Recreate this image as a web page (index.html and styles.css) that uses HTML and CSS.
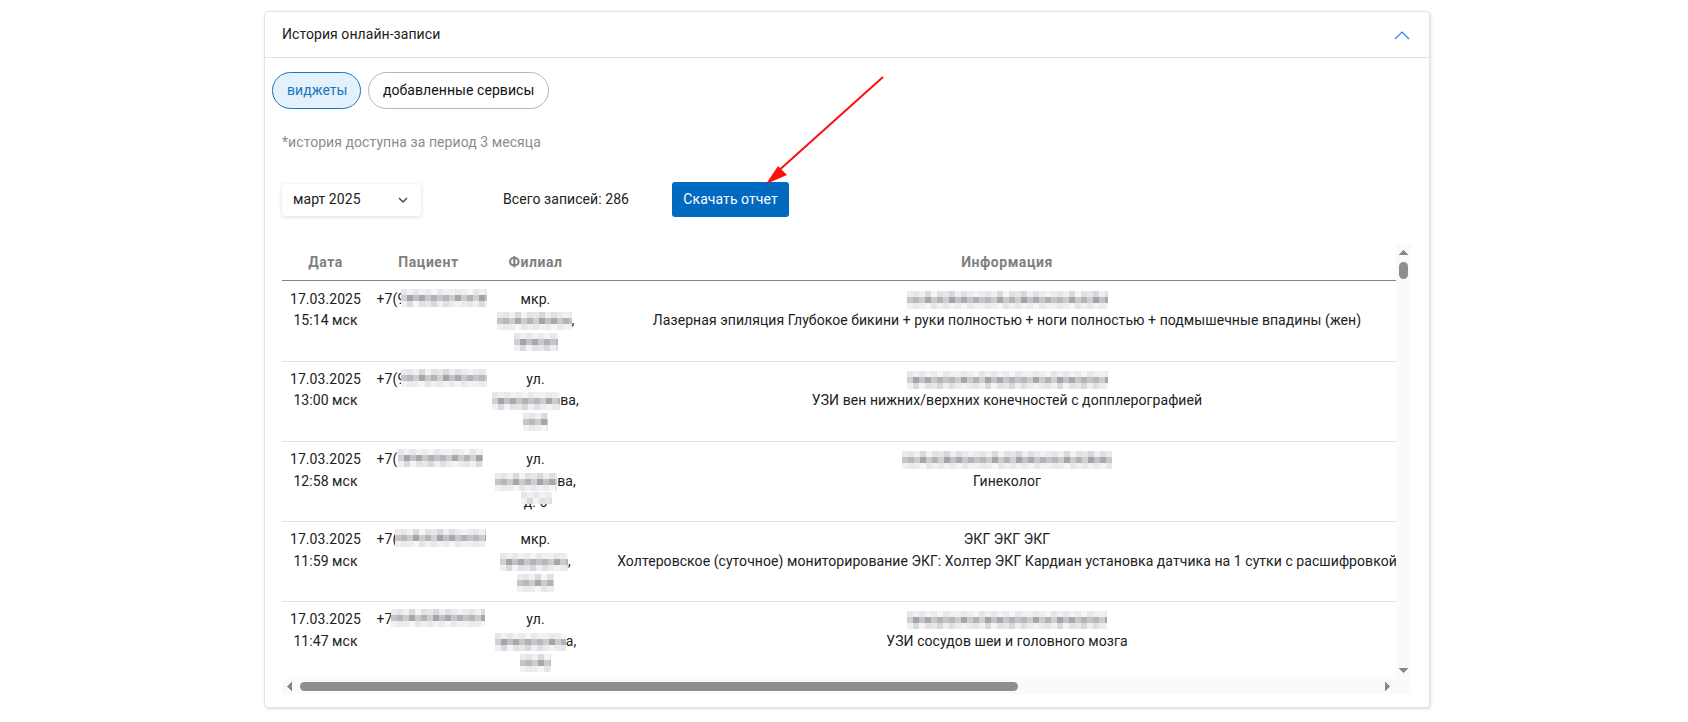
FILE: index.html
```html
<!DOCTYPE html>
<html lang="ru">
<head>
<meta charset="utf-8">
<title>История онлайн-записи</title>
<link rel="stylesheet" href="styles.css">
</head>
<body>
<section class="card">
  <header class="card-head">
    <span>История онлайн-записи</span>
    <svg class="collapse" width="16" height="10" viewBox="0 0 16 10"><path d="M1 9 L8 2 L15 9" fill="none" stroke="#2f7fef" stroke-width="1.2"/></svg>
  </header>
  <div class="pills">
    <button class="pill pill-on">виджеты</button>
    <button class="pill">добавленные сервисы</button>
  </div>
  <p class="note">*история доступна за период 3 месяца</p>
  <div class="toolbar">
    <div class="select"><span>март 2025</span>
      <svg width="10" height="6" viewBox="0 0 10 6"><path d="M1 1 L5 5 L9 1" fill="none" stroke="#444" stroke-width="1.4"/></svg>
    </div>
    <span class="total">Всего записей: 286</span>
    <button class="download">Скачать отчет</button>
  </div>
  <div class="grid-wrap">
    <div class="viewport">
      <table>
        <colgroup><col class="c-date"><col class="c-pat"><col class="c-fil"><col class="c-info"><col class="c-rest"></colgroup>
        <thead><tr><th>Дата</th><th>Пациент</th><th>Филиал</th><th>Информация</th><th></th></tr></thead>
        <tbody>
          <tr class="first">
            <td><div class="ln">17.03.2025</div><div class="ln">15:14 мск</div></td>
            <td class="phone">+7(9<i class="m m-alt ph1"></i></td>
            <td><div class="ln">мкр.</div><div class="ln"><i class="m f75"></i>,</div><div class="ln"><i class="m m-alt f44"></i></div></td>
            <td><div class="ln"><i class="m n201"></i></div><div class="ln">Лазерная эпиляция Глубокое бикини + руки полностью + ноги полностью + подмышечные впадины (жен)</div></td><td></td>
          </tr>
          <tr>
            <td><div class="ln">17.03.2025</div><div class="ln">13:00 мск</div></td>
            <td class="phone">+7(9<i class="m ph1"></i></td>
            <td><div class="ln">ул.</div><div class="ln"><i class="m m-alt f68"></i>ва,</div><div class="ln"><i class="m f25"></i></div></td>
            <td><div class="ln"><i class="m m-alt n201"></i></div><div class="ln">УЗИ вен нижних/верхних конечностей с допплерографией</div></td><td></td>
          </tr>
          <tr class="tall">
            <td><div class="ln">17.03.2025</div><div class="ln">12:58 мск</div></td>
            <td class="phone">+7(<i class="m m-alt ph2"></i></td>
            <td><div class="ln">ул.</div><div class="ln"><i class="m f62"></i>ва,</div><div class="ln"><span class="peek">д. 6<i class="m m-alt f31"></i></span></div></td>
            <td><div class="ln"><i class="m n210"></i></div><div class="ln">Гинеколог</div></td><td></td>
          </tr>
          <tr class="tall">
            <td><div class="ln">17.03.2025</div><div class="ln">11:59 мск</div></td>
            <td class="phone">+7(<i class="m ph3"></i></td>
            <td><div class="ln">мкр.</div><div class="ln"><i class="m m-alt f68"></i>,</div><div class="ln"><i class="m f37"></i></div></td>
            <td><div class="ln">ЭКГ ЭКГ ЭКГ</div><div class="ln">Холтеровское (суточное) мониторирование ЭКГ: Холтер ЭКГ Кардиан установка датчика на 1 сутки с расшифровкой</div></td><td></td>
          </tr>
          <tr class="tall">
            <td><div class="ln">17.03.2025</div><div class="ln">11:47 мск</div></td>
            <td class="phone">+7<i class="m ph4"></i></td>
            <td><div class="ln">ул.</div><div class="ln"><i class="m m-alt f71"></i>а,</div><div class="ln"><i class="m f31"></i></div></td>
            <td><div class="ln"><i class="m m-alt n200"></i></div><div class="ln">УЗИ сосудов шеи и головного мозга</div></td><td></td>
          </tr>
        </tbody>
      </table>
    </div>
    <div class="vbar">
      <i class="tri tri-up"></i>
      <i class="vthumb"></i>
      <i class="tri tri-down"></i>
    </div>
    <div class="hbar">
      <i class="tri tri-left"></i>
      <i class="hthumb"></i>
      <i class="tri tri-right"></i>
    </div>
    <div class="corner"></div>
  </div>
  <svg class="arrow" width="130" height="116" viewBox="0 0 130 116">
    <path d="M123 5 L16 101" stroke="#fb0f0f" stroke-width="2" fill="none"/>
    <path d="M6 112 L18 94 L27 103 Z" fill="#fb0f0f"/>
  </svg>
</section>
</body>
</html>
```

FILE: styles.css
```css
:root {
  --r1: linear-gradient(90deg, #eceaea 0 6px, #e4e6ea 6px 12px, #f1eff0 12px 18px, #d9dade 18px 24px, #f4f4f6 24px 30px, #e2e2e6 30px 36px, #e9e6e6 36px 42px, #d6d8dc 42px 48px, #efeff2 48px 54px, #e0e0e4 54px 60px, #ebebee 60px 66px, #f2f2f4 66px 72px);
  --r2: linear-gradient(90deg, #c6c4c6 0 6px, #b6b8bf 6px 12px, #cfcccc 12px 18px, #a9a6a8 18px 24px, #c8cbd2 24px 30px, #b8b2b0 30px 36px, #d0d0d4 36px 42px, #a2a4aa 42px 48px, #bfc2c8 48px 54px, #aaa8aa 54px 60px, #c6c8cc 60px 66px, #b0b2b8 66px 72px);
  --r3: linear-gradient(90deg, #f2f0f0 0 6px, #e8eaee 6px 12px, #eeeeee 12px 18px, #f6f6f6 18px 24px, #e6e6e8 24px 30px, #f0f0f2 30px 36px, #e6e8ec 36px 42px, #f3f1f1 42px 48px, #ebebeb 48px 54px, #f5f5f7 54px 60px, #e9e9ec 60px 66px, #f1f1f1 66px 72px);
}

* { box-sizing: border-box; }

html, body { height: 100%; }

body {
  margin: 0;
  padding: 11px 0 0 264px;
  background: #fff;
  color: #212121;
  font: 14px/21px Roboto, "Liberation Sans", Arial, sans-serif;
  letter-spacing: .065px;
  overflow: hidden;
}

.card {
  position: relative;
  width: 1166px;
  height: 697px;
  border: 1px solid #e4e4e4;
  border-radius: 4px;
  box-shadow: 1px 1px 3px rgba(0, 0, 0, .14);
}

.card-head {
  display: flex;
  align-items: center;
  justify-content: space-between;
  height: 46px;
  padding: 0 19px 0 17px;
  border-bottom: 1px solid #e2e2e2;
}

.pills {
  display: flex;
  gap: 7px;
  padding: 14px 0 0 7px;
}

.pill {
  height: 37px;
  padding: 0 14px;
  border: 1px solid #b5b5b5;
  border-radius: 19px;
  background: #fff;
  color: #111;
  font: inherit;
  letter-spacing: inherit;
}

.pill-on {
  width: 89px;
  border-color: #1a76c0;
  background: #e3f1fb;
  color: #1a76c0;
}

.note {
  margin: 23px 0 0 17px;
  color: #8c8c8c;
}

.toolbar {
  display: flex;
  align-items: center;
  height: 35px;
  margin: 29px 0 0 17px;
}

.select {
  display: flex;
  align-items: center;
  justify-content: space-between;
  width: 139px;
  height: 32px;
  padding: 0 13px 0 11px;
  border-radius: 4px;
  box-shadow: 0 1px 4px rgba(0, 0, 0, .14);
}

.total { margin-left: 82px; }

.download {
  width: 117px;
  height: 35px;
  margin-left: 43px;
  padding: 0;
  border: 0;
  border-radius: 3px;
  background: #0069c0;
  color: #fff;
  font: inherit;
  letter-spacing: inherit;
}

.grid-wrap {
  display: grid;
  grid-template: 435px 15px / 1114px 15px;
  width: 1129px;
  margin: 27px 0 0 17px;
}

.viewport { overflow: hidden; }

.vbar,
.hbar,
.corner { background: #fafafa; }

.vbar {
  display: flex;
  flex-direction: column;
  align-items: center;
  padding: 6px 0;
}

.hbar {
  display: flex;
  align-items: center;
  padding: 0 6px 0 5px;
}

.vthumb {
  width: 9px;
  height: 17px;
  margin-top: 7px;
  border-radius: 5px;
  background: #8e8e8e;
}

.hthumb {
  width: 718px;
  height: 9px;
  margin-left: 8px;
  border-radius: 5px;
  background: #8e8e8e;
}

.tri { display: block; flex: none; }

.tri-up {
  width: 9px;
  height: 5px;
  background: conic-gradient(from 138deg at 50% 0, #888 0 84deg, transparent 0);
}

.tri-down {
  width: 9px;
  height: 5px;
  margin-top: auto;
  background: conic-gradient(from -42deg at 50% 100%, #888 0 84deg, transparent 0);
}

.tri-left {
  width: 5px;
  height: 9px;
  background: conic-gradient(from 48deg at 0 50%, #888 0 84deg, transparent 0);
}

.tri-right {
  width: 5px;
  height: 9px;
  margin-left: auto;
  background: conic-gradient(from 228deg at 100% 50%, #888 0 84deg, transparent 0);
}

table {
  width: 1671px;
  table-layout: fixed;
  border-collapse: separate;
  border-spacing: 0;
}

.c-date { width: 87px; }
.c-pat { width: 119px; }
.c-fil { width: 95px; }
.c-info { width: 848px; }
.c-rest { width: 522px; }

th {
  height: 37px;
  padding: 0;
  border-bottom: 1px solid #848484;
  color: #808080;
  font-weight: 700;
  letter-spacing: .55px;
}

td {
  height: 80px;
  padding: 7px 0 0;
  border-bottom: 1px solid #e2e2e8;
  text-align: center;
  vertical-align: top;
  white-space: nowrap;
}

.first td { height: 81px; padding-top: 8px; }

.ln { height: 21px; }

.tall .ln:first-child { height: 22px; }

.phone {
  padding-left: 7.6px;
  text-align: left;
}

.m {
  display: inline-block;
  height: 18px;
  vertical-align: -5px;
  background:
    var(--r1) 0 0 / 72px 6px repeat-x,
    var(--r2) 0 6px / 72px 6px repeat-x,
    var(--r3) 0 12px / 72px 6px repeat-x;
}

.m-alt {
  background:
    var(--r3) -24px 0 / 72px 6px repeat-x,
    var(--r2) -36px 6px / 72px 6px repeat-x,
    var(--r1) -12px 12px / 72px 6px repeat-x;
}

.peek {
  position: relative;
  display: inline-block;
}

.peek .m {
  position: absolute;
  top: 0;
  left: -3px;
  height: 12px;
  background-position-y: 0, 0, 6px;
}

.phone .m { height: 20px; margin-left: -4px; }
.ph1 { width: 86px; }
.ph2 { width: 85px; margin-left: 1px !important; }
.ph3 { width: 91px; margin-left: -2px !important; }
.ph4 { width: 94px; margin-left: -2px !important; }

.f25 { width: 25px; }
.f31 { width: 31px; }
.f37 { width: 37px; }
.f44 { width: 44px; }
.f62 { width: 62px; }
.f68 { width: 68px; }
.f71 { width: 71px; }
.f75 { width: 75px; }

.n200 { width: 200px; }
.n201 { width: 201px; }
.n210 { width: 210px; }

.arrow {
  position: absolute;
  left: 495px;
  top: 60px;
}
```
